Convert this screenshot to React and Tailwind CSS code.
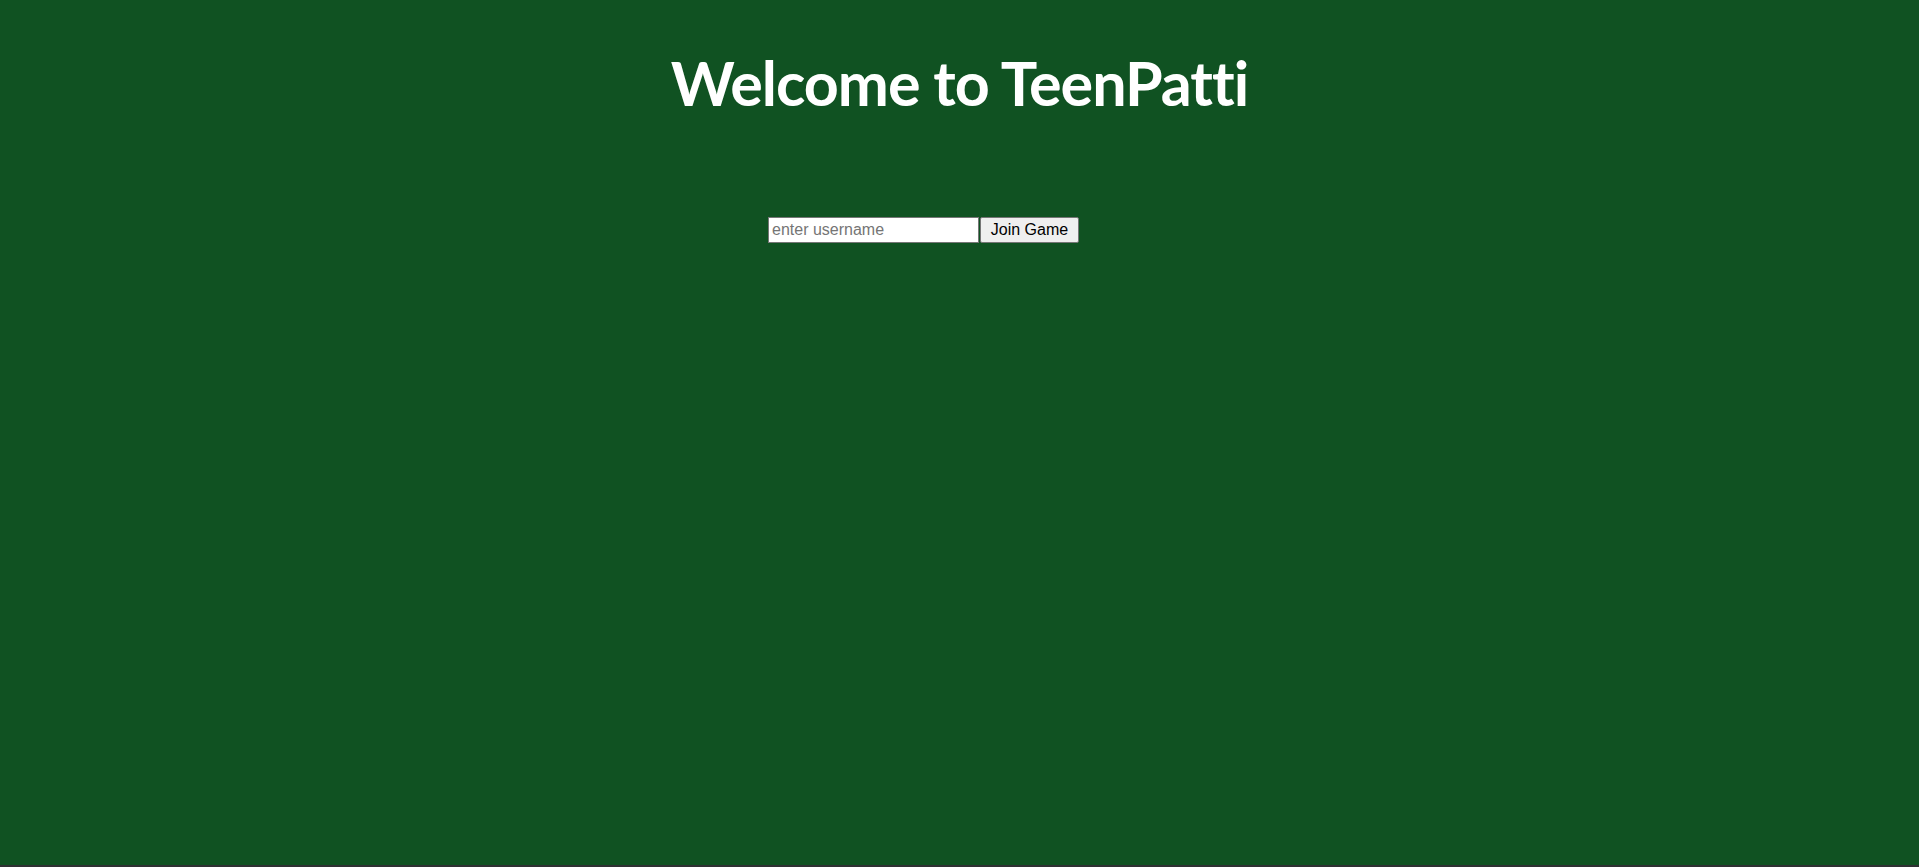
export default function App() {
  return (
    <div className="min-h-screen bg-[#2f3133]">
      <div className="h-[865px] bg-[#105222] flex flex-col items-center">
        <h1
          className="mt-[47px] text-white font-bold text-[61px] leading-[72px] tracking-[-1px]"
          style={{ fontFamily: 'Lato, "Open Sans", sans-serif', fontVariantLigatures: "none" }}
        >
          Welcome to TeenPatti
        </h1>
        <div
          className="mt-[98px] mr-[72px] flex items-center"
          style={{ fontFamily: '"Liberation Sans", Arial, sans-serif' }}
        >
          <input
            type="text"
            placeholder="enter username"
            className="w-[211px] h-[26px] bg-white border border-[#767676] px-[3px] text-[16px] text-black placeholder:text-[#757575] outline-none"
          />
          <button className="ml-[1px] w-[99px] h-[26px] bg-[#efefef] border border-[#767676] rounded-[2px] text-[16px] text-black">
            Join Game
          </button>
        </div>
      </div>
    </div>
  );
}
